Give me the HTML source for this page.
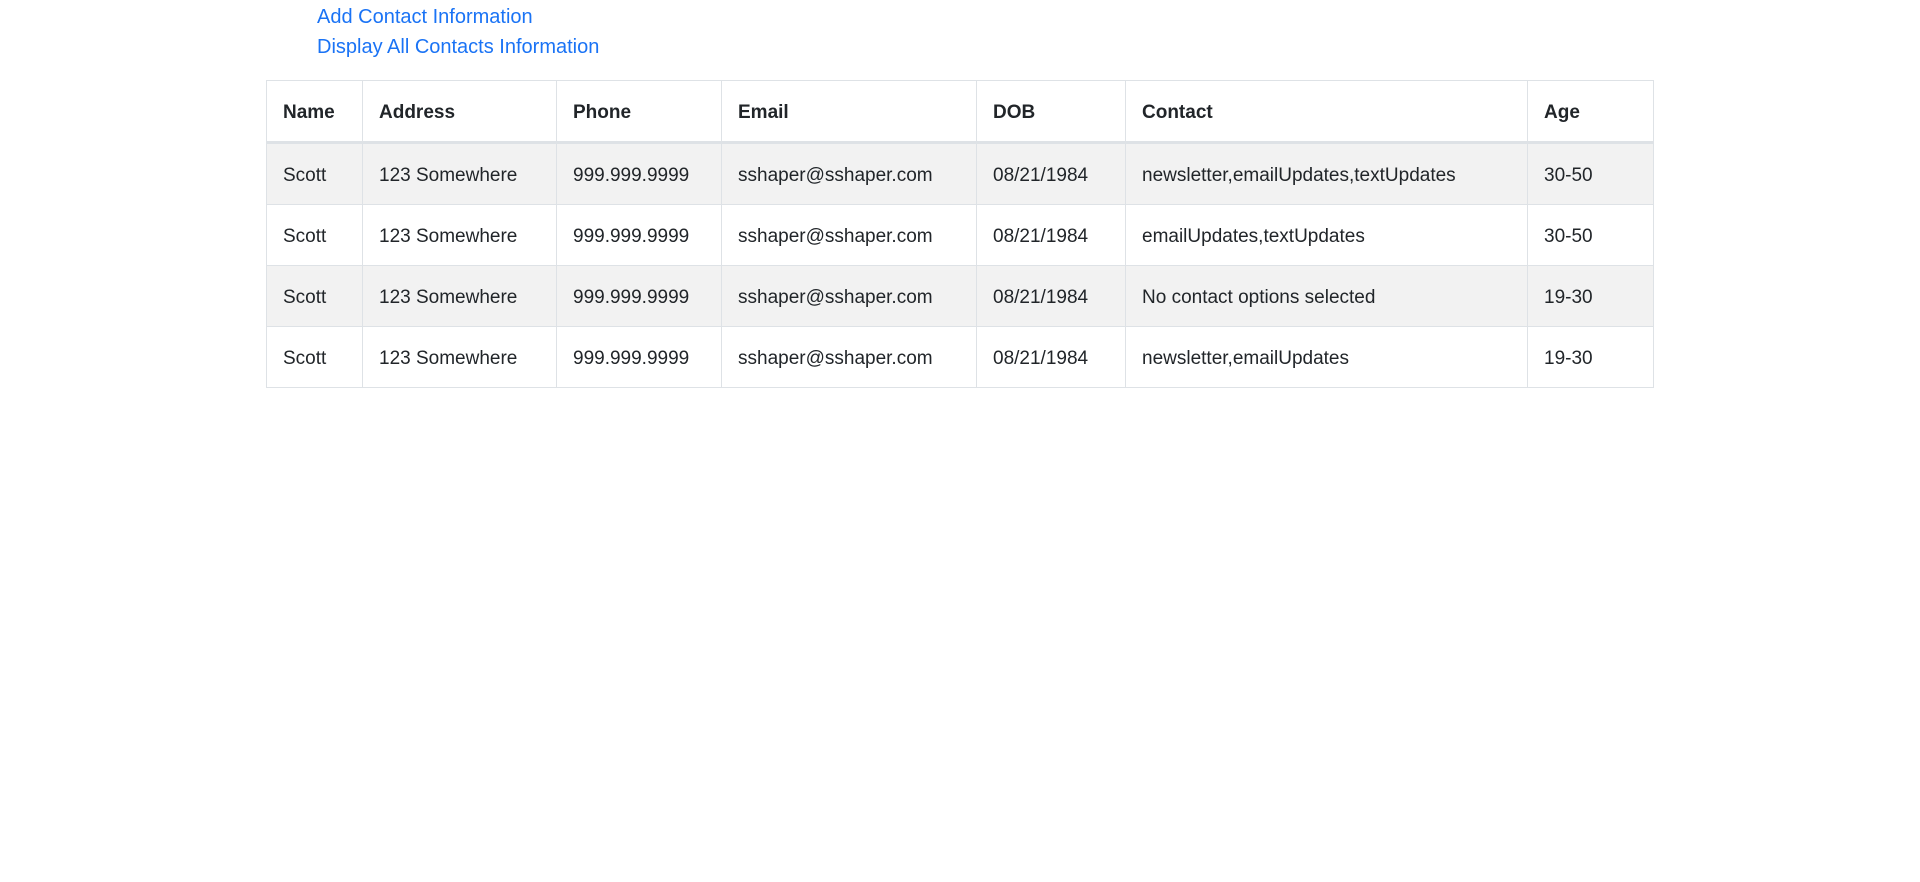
<!DOCTYPE html>
<html><head><meta charset="utf-8"><style>
body{margin:0;background:#fff;font-family:"Liberation Sans",sans-serif;color:#212529;}
.links{position:absolute;left:317px;top:2px;font-size:20px;line-height:30px;}
.links a{color:#1a73f5;text-decoration:none;display:block;}
table{position:absolute;left:266px;top:80px;width:1387px;border-collapse:collapse;table-layout:fixed;font-size:19px;}
td,th{border:1px solid #dee2e6;padding:3px 0 0 16px;text-align:left;height:57px;white-space:nowrap;overflow:hidden;}
th{font-weight:bold;height:57px;border-bottom:3px solid #dee2e6;}
tbody tr:nth-child(odd){background:#f2f2f2;}
</style></head><body>
<div class="links"><a>Add Contact Information</a><a>Display All Contacts Information</a></div>
<table>
<colgroup><col style="width:96px"><col style="width:194px"><col style="width:165px"><col style="width:255px"><col style="width:149px"><col style="width:402px"><col style="width:126px"></colgroup>
<thead><tr><th>Name</th><th>Address</th><th>Phone</th><th>Email</th><th>DOB</th><th>Contact</th><th>Age</th></tr></thead>
<tbody>
<tr><td>Scott</td><td>123 Somewhere</td><td>999.999.9999</td><td>sshaper@sshaper.com</td><td>08/21/1984</td><td>newsletter,emailUpdates,textUpdates</td><td>30-50</td></tr>
<tr><td>Scott</td><td>123 Somewhere</td><td>999.999.9999</td><td>sshaper@sshaper.com</td><td>08/21/1984</td><td>emailUpdates,textUpdates</td><td>30-50</td></tr>
<tr><td>Scott</td><td>123 Somewhere</td><td>999.999.9999</td><td>sshaper@sshaper.com</td><td>08/21/1984</td><td>No contact options selected</td><td>19-30</td></tr>
<tr><td>Scott</td><td>123 Somewhere</td><td>999.999.9999</td><td>sshaper@sshaper.com</td><td>08/21/1984</td><td>newsletter,emailUpdates</td><td>19-30</td></tr>
</tbody></table>
</body></html>
